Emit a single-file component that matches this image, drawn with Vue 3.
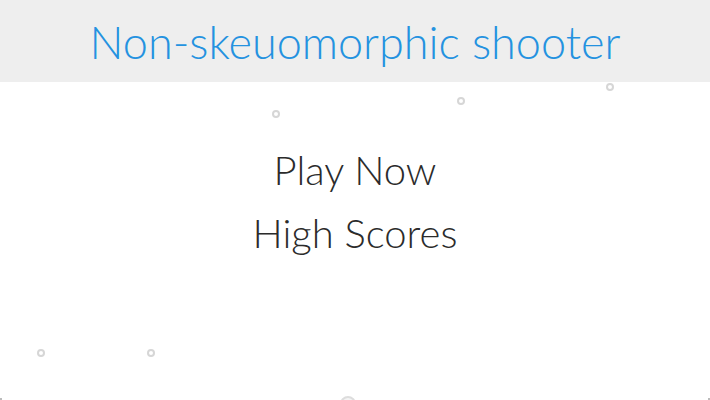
<template>
    <div class="game">
        <header class="title-bar">
            <h1>Non-skeuomorphic shooter</h1>
        </header>
        <nav class="menu">
            <button type="button">Play Now</button>
            <button type="button">High Scores</button>
        </nav>
        <svg
            v-for="(enemy, index) in enemies"
            :key="index"
            class="enemy"
            :style="{ left: enemy.x + 'px', top: enemy.y + 'px' }"
            viewBox="0 0 10 10"
        >
            <circle cx="5" cy="5" r="3" />
        </svg>
        <svg class="player" viewBox="0 0 20 20">
            <circle cx="10" cy="10" r="7" />
        </svg>
        <span class="corner left"></span>
        <span class="corner right"></span>
    </div>
</template>
<script setup>
    import { ref } from 'vue'
    const enemies = ref([
        { x: 276, y: 114 },
        { x: 461, y: 101 },
        { x: 610, y: 87 },
        { x: 41, y: 353 },
        { x: 151, y: 353 }
    ])
</script>
<style>
    body {
        margin: 0;
        background-color: #fff;
    }
</style>
<style scoped>
    .game {
        position: relative;
        min-height: 100vh;
        overflow: hidden;
        font-family: Lato, "Liberation Sans", sans-serif;
        font-weight: 300;
    }
    .title-bar {
        padding: 14px 0 12px;
        background-color: #eee;
        text-align: center;
    }
    .title-bar h1 {
        margin: 0;
        font-size: 45px;
        font-weight: 300;
        line-height: 56px;
        color: #2492e0;
    }
    .menu {
        display: flex;
        flex-direction: column;
        align-items: center;
        padding-top: 57px;
    }
    .menu button {
        padding: 0;
        border: none;
        background-color: transparent;
        font: inherit;
        font-size: 40px;
        line-height: 63px;
        color: #2b2b2b;
        cursor: pointer;
    }
    .enemy {
        position: absolute;
        width: 10px;
        height: 10px;
        transform: translate(-50%, -50%);
        fill: #fff;
        stroke: #d6d6d6;
        stroke-width: 2;
    }
    .player {
        position: absolute;
        left: 49%;
        bottom: -14px;
        width: 20px;
        height: 20px;
        transform: translateX(-50%);
        fill: #f4f4f4;
        stroke: #ddd;
        stroke-width: 2;
    }
    .corner {
        position: absolute;
        bottom: 0;
        width: 2px;
        height: 2px;
        background-color: #bbb;
    }
    .corner.left {
        left: 0;
    }
    .corner.right {
        right: 0;
    }
</style>
